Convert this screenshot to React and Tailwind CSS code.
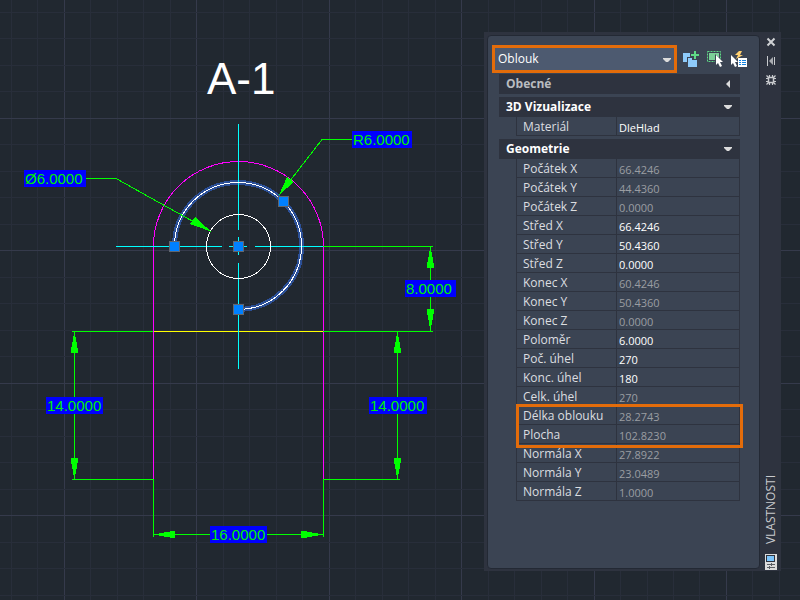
const GREEN = "#00ff00";
const MAGENTA = "#ff00ff";
const CYAN = "#00ffff";
const GRID_STEP = 26.48;

const geometry = [
  { label: "Počátek X", value: "66.4246", readOnly: true },
  { label: "Počátek Y", value: "44.4360", readOnly: true },
  { label: "Počátek Z", value: "0.0000", readOnly: true },
  { label: "Střed X", value: "66.4246" },
  { label: "Střed Y", value: "50.4360" },
  { label: "Střed Z", value: "0.0000" },
  { label: "Konec X", value: "60.4246", readOnly: true },
  { label: "Konec Y", value: "50.4360", readOnly: true },
  { label: "Konec Z", value: "0.0000", readOnly: true },
  { label: "Poloměr", value: "6.0000" },
  { label: "Poč. úhel", value: "270" },
  { label: "Konc. úhel", value: "180" },
  { label: "Celk. úhel", value: "270", readOnly: true },
];

const measured = [
  { label: "Délka oblouku", value: "28.2743", readOnly: true },
  { label: "Plocha", value: "102.8230", readOnly: true },
];

const normals = [
  { label: "Normála X", value: "27.8922", readOnly: true },
  { label: "Normála Y", value: "23.0489", readOnly: true },
  { label: "Normála Z", value: "1.0000", readOnly: true },
];

const dimensions = [
  { text: "R6.0000", x: 352, y: 131, w: 60 },
  { text: "Ø6.0000", x: 24, y: 170, w: 62 },
  { text: "8.0000", x: 405, y: 280, w: 51 },
  { text: "14.0000", x: 46, y: 397, w: 57 },
  { text: "14.0000", x: 369, y: 397, w: 58 },
  { text: "16.0000", x: 210, y: 526, w: 57 },
];

const grips = [
  [174, 246],
  [238, 246],
  [238, 309],
  [283, 201],
];

function GridLines() {
  const lines = Array.from({ length: 100 }, (_, i) => i);
  const isMajorX = (i) => i % 5 === 2;
  const isMajorY = (i) => i % 5 === 4;
  const color = (major) => (major ? "#353a4b" : "#282e3a");

  return (
    <g>
      {lines.map((i) => {
        const x = Math.round(11 + i * GRID_STEP) + 0.5;
        return <line key={i} x1={x} x2={x} y1="0" y2="100%" stroke={color(isMajorX(i))} />;
      })}
      {lines.map((i) => {
        const y = Math.round(12 + i * GRID_STEP) + 0.5;
        return <line key={i} x1="0" x2="100%" y1={y} y2={y} stroke={color(isMajorY(i))} />;
      })}
    </g>
  );
}

function Drawing() {
  return (
    <svg className="absolute inset-0 h-full w-full" shapeRendering="crispEdges">
      <GridLines />

      {/* outline of the part */}
      <path
        d="M153.5 479V246.5A85 85 0 0 1 323.5 246.5V479"
        fill="none"
        stroke={MAGENTA}
      />
      <path d="M154 331.5H323" stroke="#ffff00" />

      {/* glow of the selected arc */}
      <path
        d="M174.5 246.5A63.5 63.5 0 1 1 238.5 309.5"
        fill="none"
        stroke="#2b4f96"
        strokeWidth="5"
      />

      {/* center lines */}
      <path
        d="M238.5 124V230M238.5 237V255M238.5 263V369M116 246.5H222M229 246.5H247M255 246.5H323"
        stroke={CYAN}
      />

      <g fill="none" stroke="#ffffff">
        <path d="M174.5 246.5A63.5 63.5 0 1 1 238.5 309.5" />
        <circle cx="238.5" cy="246.5" r="32" />
      </g>

      {/* dimension and leader lines */}
      <path
        d="M323 246.5H433M430.5 246V332M72 331.5H153M323 331.5H433M74.5 331V480M72 479.5H154M397.5 331V480M323 479.5H400M153.5 479V537M323.5 479V537M153 534.5H323M85 178.5H116L211 231.5M352 139.5H322L279 195"
        fill="none"
        stroke={GREEN}
      />
      <g fill={GREEN}>
        <path d="M430.5 246L434.5 268H426.5Z" />
        <path d="M430.5 331L434.5 309H426.5Z" />
        <path d="M74.5 331L78.5 353H70.5Z" />
        <path d="M74.5 480L78.5 458H70.5Z" />
        <path d="M397.5 331L401.5 353H393.5Z" />
        <path d="M397.5 480L401.5 458H393.5Z" />
        <path d="M153 534.5L175 530.5V538.5Z" />
        <path d="M323 534.5L301 530.5V538.5Z" />
        <path d="M211 231.5L190 224L195 217Z" />
        <path d="M279 195L287 177L294 182Z" />
      </g>

      {dimensions.map((d) => (
        <g key={d.x}>
          <rect x={d.x} y={d.y} width={d.w} height="17" fill="#0000ff" />
          <text
            x={d.x + 1}
            y={d.y + 14}
            className="font-['Liberation_Sans',sans-serif] text-[15px]"
            fill="#00f000"
          >
            {d.text}
          </text>
        </g>
      ))}

      {grips.map(([x, y]) => (
        <rect
          key={`${x}-${y}`}
          x={x - 4.5}
          y={y - 4.5}
          width="10"
          height="10"
          fill="#0080ff"
          stroke="#61666e"
        />
      ))}

      <text
        x="207"
        y="94"
        className="font-['Liberation_Sans',sans-serif] text-[44px]"
        fill="#ffffff"
      >
        A-1
      </text>
    </svg>
  );
}

function Cursor({ x, y }) {
  return (
    <path
      d={`M${x} ${y}V${y + 10}L${x + 2} ${y + 8}L${x + 4} ${y + 12}L${x + 6} ${y + 11}L${x + 4} ${y + 7}H${x + 7}Z`}
      fill="#ffffff"
    />
  );
}

function ToolbarIcons() {
  return (
    <div className="flex gap-2">
      <button type="button" aria-label="PICKADD">
        <svg className="h-4 w-4" viewBox="0 0 16 16">
          <path d="M0 2H7V6H4V11H0Z" fill="#8ecbfb" />
          <path d="M5 7H9V9H14V16H5Z" fill="#8ecbfb" />
          <path d="M11 0H13V3H16V5H13V8H11V5H8V3H11Z" fill="#5fd986" />
        </svg>
      </button>
      <button type="button" aria-label="Select">
        <svg className="h-4 w-4" viewBox="0 0 16 16">
          <rect
            x="0.5"
            y="0.5"
            width="13"
            height="10"
            fill="none"
            stroke="#5fd986"
            strokeDasharray="2 1"
          />
          <rect x="2" y="2" width="10" height="7" fill="#7ccf98" />
          <path d="M8 3V15L16 11Z" fill="#3b4453" />
          <Cursor x={9} y={4} />
        </svg>
      </button>
      <button type="button" aria-label="Quick select">
        <svg className="h-4 w-4" viewBox="0 0 16 16">
          <path d="M8 0L4 4H7L5 8L12 4H9L11 0Z" fill="#ffd070" />
          <Cursor x={0} y={4} />
          <rect x="7" y="7" width="9" height="9" fill="#ffffff" />
          <path
            d="M8 9.5H10M11 9.5H15M8 11.5H10M11 11.5H15M8 13.5H10M11 13.5H15"
            stroke="#1584e0"
          />
        </svg>
      </button>
    </div>
  );
}

function SectionHeader({ title, collapsed }) {
  return (
    <button
      type="button"
      aria-expanded={!collapsed}
      className={
        collapsed
          ? "flex h-5 w-full items-center justify-between bg-[#2e333f] pr-2 pl-[7px] text-[12px] leading-5 font-bold text-[#b9bcc0]"
          : "flex h-5 w-full items-center justify-between bg-[#2e333f] pr-2 pl-[7px] text-[12px] leading-5 font-bold text-white"
      }
    >
      {title}
      <svg className="h-2 w-2" viewBox="0 0 8 8" fill="#dcdcdc">
        {collapsed ? <path d="M6 0V8L2 4Z" /> : <path d="M0 2H8V3L5 6H3L0 3Z" />}
      </svg>
    </button>
  );
}

function Rows({ rows, className }) {
  return (
    <tbody className={className}>
      {rows.map((row) => (
        <tr key={row.label} className="h-[19px]">
          <th
            scope="row"
            className="w-[101px] border-r border-b border-l border-[#2e333f] p-0 pt-0.5 pl-1.5 text-left text-[12px] leading-4 font-normal whitespace-nowrap text-[#dcdee0]"
          >
            {row.label}
          </th>
          <td className="border-r border-b border-[#2e333f] p-0">
            <input
              type="text"
              aria-label={row.label}
              defaultValue={row.value}
              readOnly={row.readOnly}
              className={
                row.readOnly
                  ? "block h-[18px] w-full pt-0.5 pl-0.5 text-[11px] leading-4 text-[#9a9da2] outline-none"
                  : "block h-[18px] w-full pt-0.5 pl-0.5 text-[11px] leading-4 text-white outline-none"
              }
            />
          </td>
        </tr>
      ))}
    </tbody>
  );
}

function PropertyTable({ children }) {
  return (
    <div className="pl-[17px]">
      <table className="w-full table-fixed border-separate border-spacing-0">{children}</table>
    </div>
  );
}

function TitleStrip() {
  return (
    <div className="flex w-[21px] shrink-0 flex-col items-center pt-[5px]">
      <button type="button" aria-label="Zavřít">
        <svg className="h-[10px] w-[10px]" viewBox="0 0 10 10">
          <path d="M1.5 1.5L8.5 8.5M8.5 1.5L1.5 8.5" stroke="#d0d2d5" strokeWidth="2" />
        </svg>
      </button>
      <button type="button" aria-label="Automaticky skrýt" className="mt-[9px]">
        <svg className="h-[10px] w-[10px]" viewBox="0 0 10 10">
          <path d="M1 0H2V10H1ZM8 1H9V9H8Z" fill="#c8cacd" />
          <path d="M3 5L7 1V9Z" fill="#a9acb1" />
        </svg>
      </button>
      <button type="button" aria-label="Nastavení" className="mt-[9px]">
        <svg className="h-[10px] w-[10px]" viewBox="0 0 10 10" fill="none" stroke="#c8cacd">
          <rect x="2.5" y="2.5" width="5" height="5" strokeWidth="1.5" />
          <path
            d="M3.5 0V2M6.5 0V2M3.5 8V10M6.5 8V10M0 3.5H2M0 6.5H2M8 3.5H10M8 6.5H10M0.5 0.5L2.5 2.5M9.5 0.5L7.5 2.5M0.5 9.5L2.5 7.5M9.5 9.5L7.5 7.5"
            strokeWidth="1.2"
          />
        </svg>
      </button>
      <h2 className="mt-auto mb-2.5 rotate-180 text-[12px] leading-4 text-[#c8cacd] [writing-mode:vertical-rl]">
        VLASTNOSTI
      </h2>
      <svg className="mb-px h-4 w-3" viewBox="0 0 12 16" shapeRendering="crispEdges">
        <rect width="12" height="16" fill="#dcdcdc" />
        <rect x="1" y="1" width="9" height="7" fill="#2e333f" />
        <rect x="2" y="2" width="7" height="5" fill="#7cc4fb" />
        <path d="M2 10.5H10M2 13.5H10M6.5 9V12M4.5 12V15" stroke="#5a5d63" />
      </svg>
    </div>
  );
}

function PropertiesPalette() {
  return (
    <aside className="relative mt-8 mr-[19px] flex w-[297px] bg-[#2e333f] font-['Open_Sans',sans-serif]">
      <div className="mt-[3px] mb-0.5 ml-[3px] min-w-0 grow rounded border border-[#232934] bg-[#3b4453] pt-[9px] pr-[19px] pb-[67px] pl-2">
        <div className="-mr-[7px] flex items-center justify-between">
          <div className="relative -ml-1 w-[185px] shrink-0 border-3 border-[#e36c0a]">
            <select
              aria-label="Typ objektu"
              className="block h-[22px] w-full appearance-none bg-[#4d5a70] pl-[3px] text-[12px] leading-[22px] text-white outline-none"
            >
              <option>Oblouk</option>
            </select>
            <svg
              className="pointer-events-none absolute top-[7px] right-[3px] h-2 w-2"
              viewBox="0 0 8 8"
              fill="#dcdcdc"
            >
              <path d="M0 3H8V4L5 7H3L0 4Z" />
            </svg>
          </div>
          <ToolbarIcons />
        </div>

        <div className="mt-px flex flex-col gap-[3px] pl-[3px]">
          <SectionHeader title="Obecné" collapsed />
          <section>
            <SectionHeader title="3D Vizualizace" />
            <PropertyTable>
              <Rows rows={[{ label: "Materiál", value: "DleHlad" }]} />
            </PropertyTable>
          </section>
          <section>
            <SectionHeader title="Geometrie" />
            <PropertyTable>
              <Rows rows={geometry} />
              <Rows
                rows={measured}
                className="relative after:pointer-events-none after:absolute after:-top-0.5 after:-right-[3px] after:-bottom-1 after:left-0 after:border-3 after:border-[#e36c0a]"
              />
              <Rows rows={normals} />
            </PropertyTable>
          </section>
        </div>
      </div>
      <TitleStrip />
    </aside>
  );
}

export default function App() {
  return (
    <main className="relative flex min-h-screen items-start justify-end overflow-hidden bg-[#212830]">
      <Drawing />
      <PropertiesPalette />
    </main>
  );
}
